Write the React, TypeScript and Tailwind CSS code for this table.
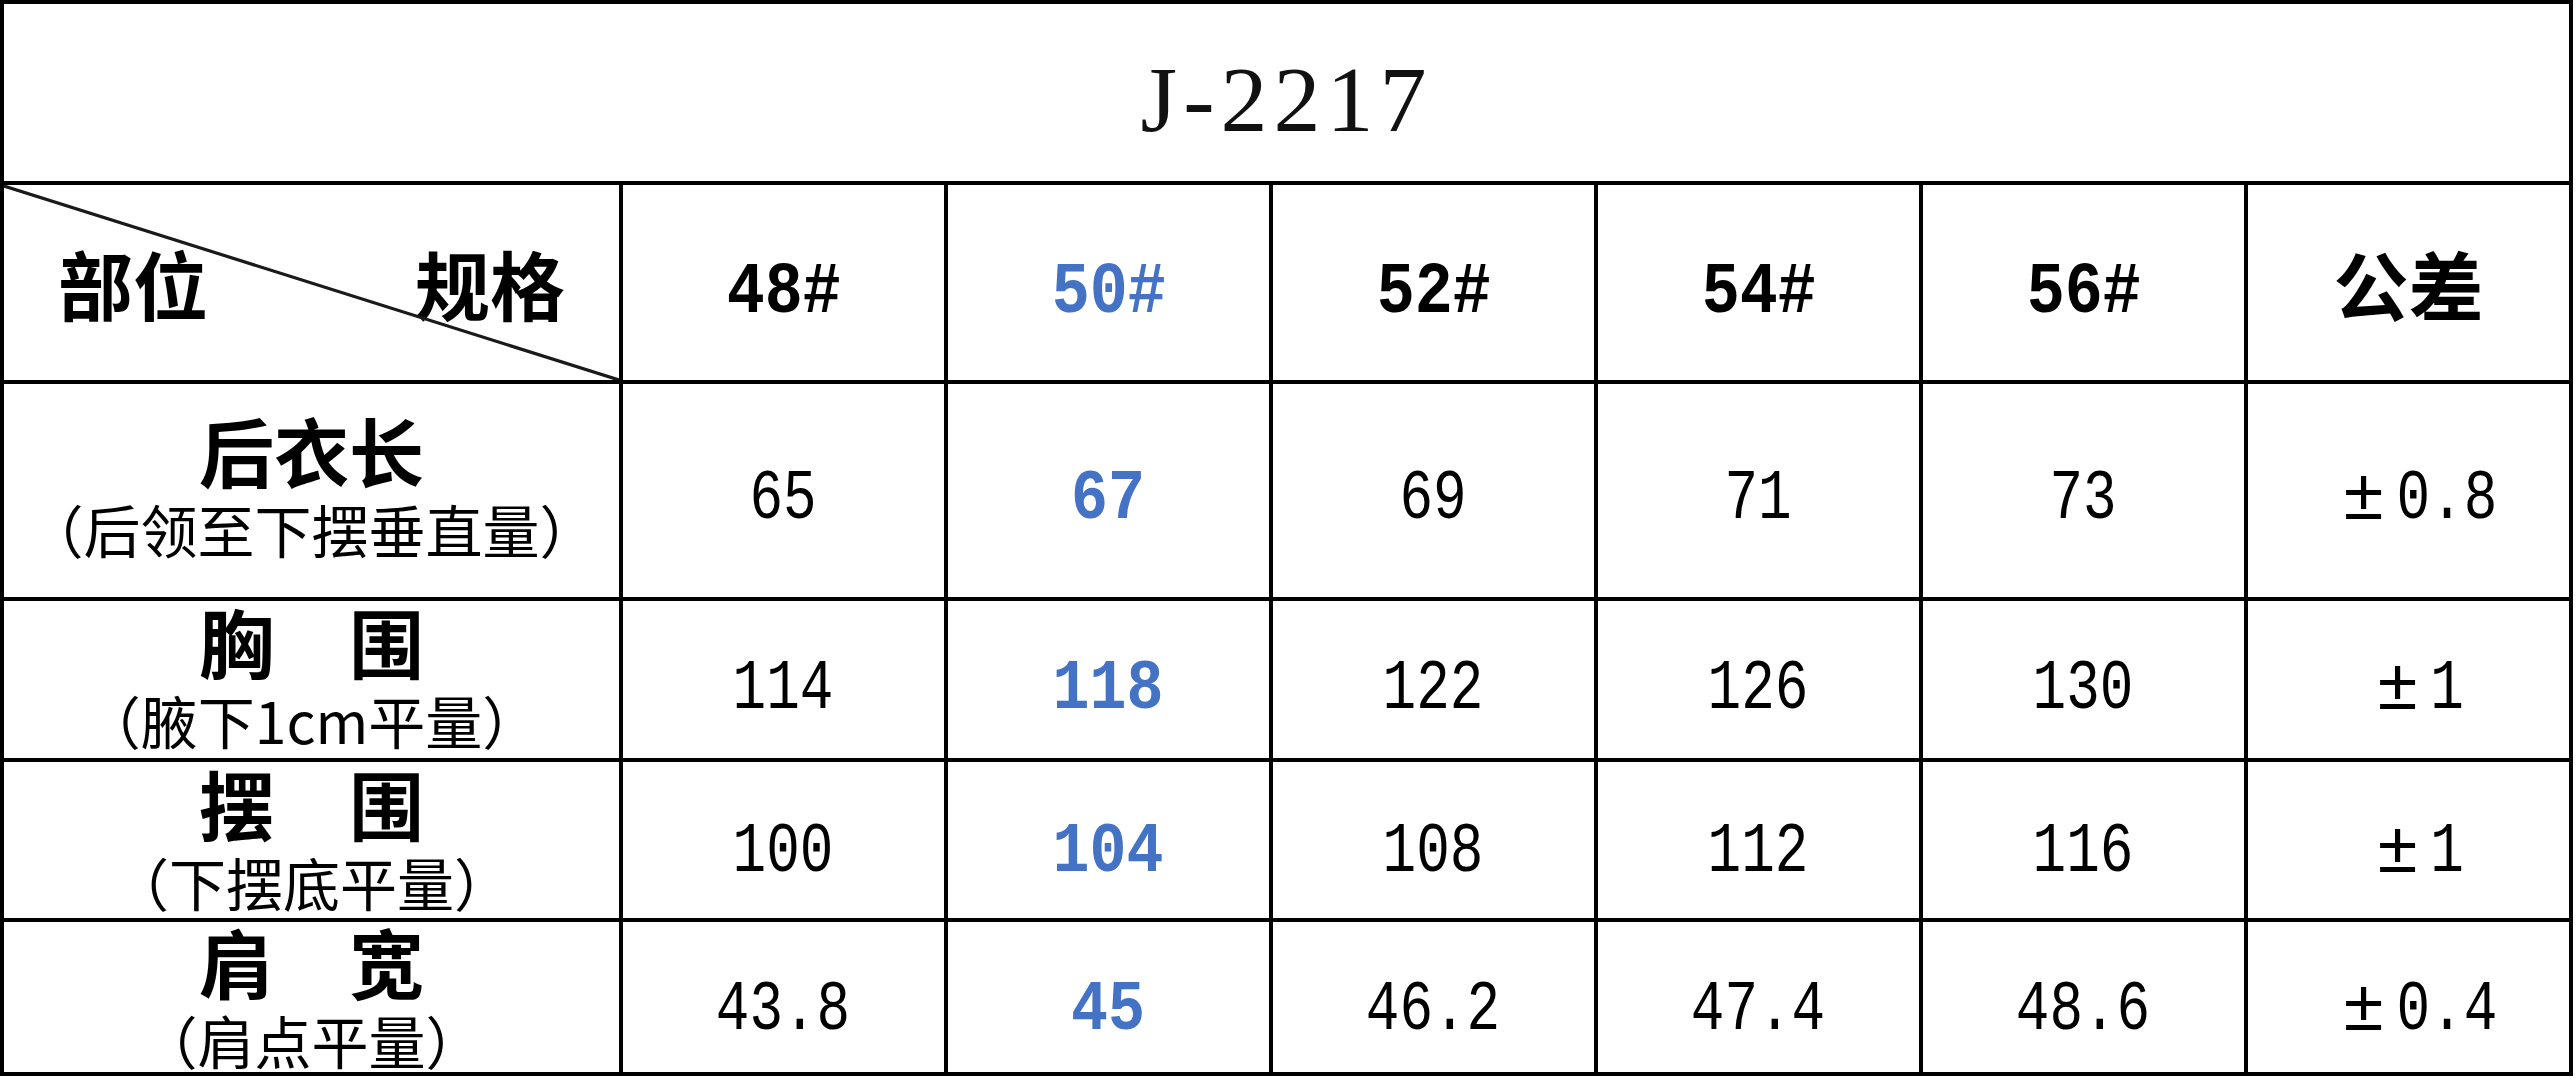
import React from 'react';

const CJK = "font-['Noto_Sans_CJK_SC','Noto_Sans_CJK_JP',sans-serif]";
const MONO = "font-['Liberation_Mono','DejaVu_Sans_Mono',monospace]";

type Row = {
  main: string;
  sub: string;
  vals: string[];
  tol: string;
  numMt: string;
  labelPb: string;
};

const rows: Row[] = [
  { main: '后衣长', sub: '（后领至下摆垂直量）', vals: ['65', '67', '69', '71', '73'], tol: '0.8', numMt: 'mt-[19px]', labelPb: 'pb-[12px]' },
  { main: '胸　围', sub: '（腋下1cm平量）', vals: ['114', '118', '122', '126', '130'], tol: '1', numMt: 'mt-[21px]', labelPb: 'pb-[8px]' },
  { main: '摆　围', sub: '（下摆底平量）', vals: ['100', '104', '108', '112', '116'], tol: '1', numMt: 'mt-[26px]', labelPb: 'pb-[6px]' },
  { main: '肩　宽', sub: '（肩点平量）', vals: ['43.8', '45', '46.2', '47.4', '48.6'], tol: '0.4', numMt: 'mt-[28px]', labelPb: 'pb-[3px]' },
];

const sizes = ['48#', '50#', '52#', '54#', '56#'];

export default function App() {
  return (
    <div className="h-[1080px] w-[2576px] bg-white">
      <div className="grid w-fit grid-cols-[615px_repeat(6,321px)] grid-rows-[177px_195px_213px_157px_156px_150px] gap-[4px] bg-black p-[4px]">
        {/* Title */}
        <div className="col-span-7 flex items-center justify-center bg-white">
          <span className="mt-[13px] font-['Liberation_Serif',serif] text-[94px] leading-none tracking-[6px] text-[#111]">
            J-2217
          </span>
        </div>

        {/* Header row */}
        <div className="relative flex items-center justify-between bg-white px-[54px]">
          <span className={CJK + ' text-[75px] font-bold leading-none text-black'}>部位</span>
          <span className={CJK + ' text-[75px] font-bold leading-none text-black'}>规格</span>
          <svg
            className="absolute inset-0 h-full w-full"
            viewBox="0 0 615 195"
            preserveAspectRatio="none"
          >
            <line x1="0" y1="1" x2="615" y2="195" stroke="#1a1a1a" strokeWidth="3.2" />
          </svg>
        </div>
        {sizes.map((s, i) => (
          <div key={s} className="flex items-center justify-center bg-white">
            <span
              className={
                MONO +
                ' mt-[20px] inline-block scale-x-[0.88] text-[72px] font-bold leading-none ' +
                (i === 1 ? 'text-[#4472C4]' : 'text-black')
              }
            >
              {s}
            </span>
          </div>
        ))}
        <div className="flex items-center justify-center bg-white">
          <span className={CJK + ' text-[75px] font-bold leading-none text-black'}>公差</span>
        </div>

        {/* Data rows */}
        {rows.map((r) => (
          <React.Fragment key={r.main}>
            <div className={'flex flex-col items-center justify-center bg-white ' + r.labelPb}>
              <span className={CJK + ' text-[75px] font-bold leading-none text-black'}>{r.main}</span>
              <span className={CJK + ' mt-[13px] text-[57px] font-normal leading-none text-black'}>{r.sub}</span>
            </div>
            {r.vals.map((v, i) => (
              <div key={i} className="flex items-center justify-center bg-white">
                {i === 1 ? (
                  <span
                    className={
                      MONO +
                      ' inline-block scale-x-[0.88] text-[70px] font-bold leading-none text-[#4472C4] ' +
                      r.numMt
                    }
                  >
                    {v}
                  </span>
                ) : (
                  <span
                    className={
                      MONO + ' inline-block scale-x-[0.8] text-[70px] font-normal leading-none text-black ' + r.numMt
                    }
                  >
                    {v}
                  </span>
                )}
              </div>
            ))}
            <div className="flex items-center justify-center bg-white pl-[12px]">
              <span className={MONO + ' inline-block w-[65px] text-center text-[72px] leading-none text-black ' + r.numMt}>
                ±
              </span>
              <span className={'flex justify-center ' + (r.tol.length === 1 ? 'w-[34px] ' : 'w-[102px] ') + r.numMt}>
                <span className={MONO + ' inline-block scale-x-[0.8] text-[70px] leading-none text-black'}>{r.tol}</span>
              </span>
            </div>
          </React.Fragment>
        ))}
      </div>
    </div>
  );
}
